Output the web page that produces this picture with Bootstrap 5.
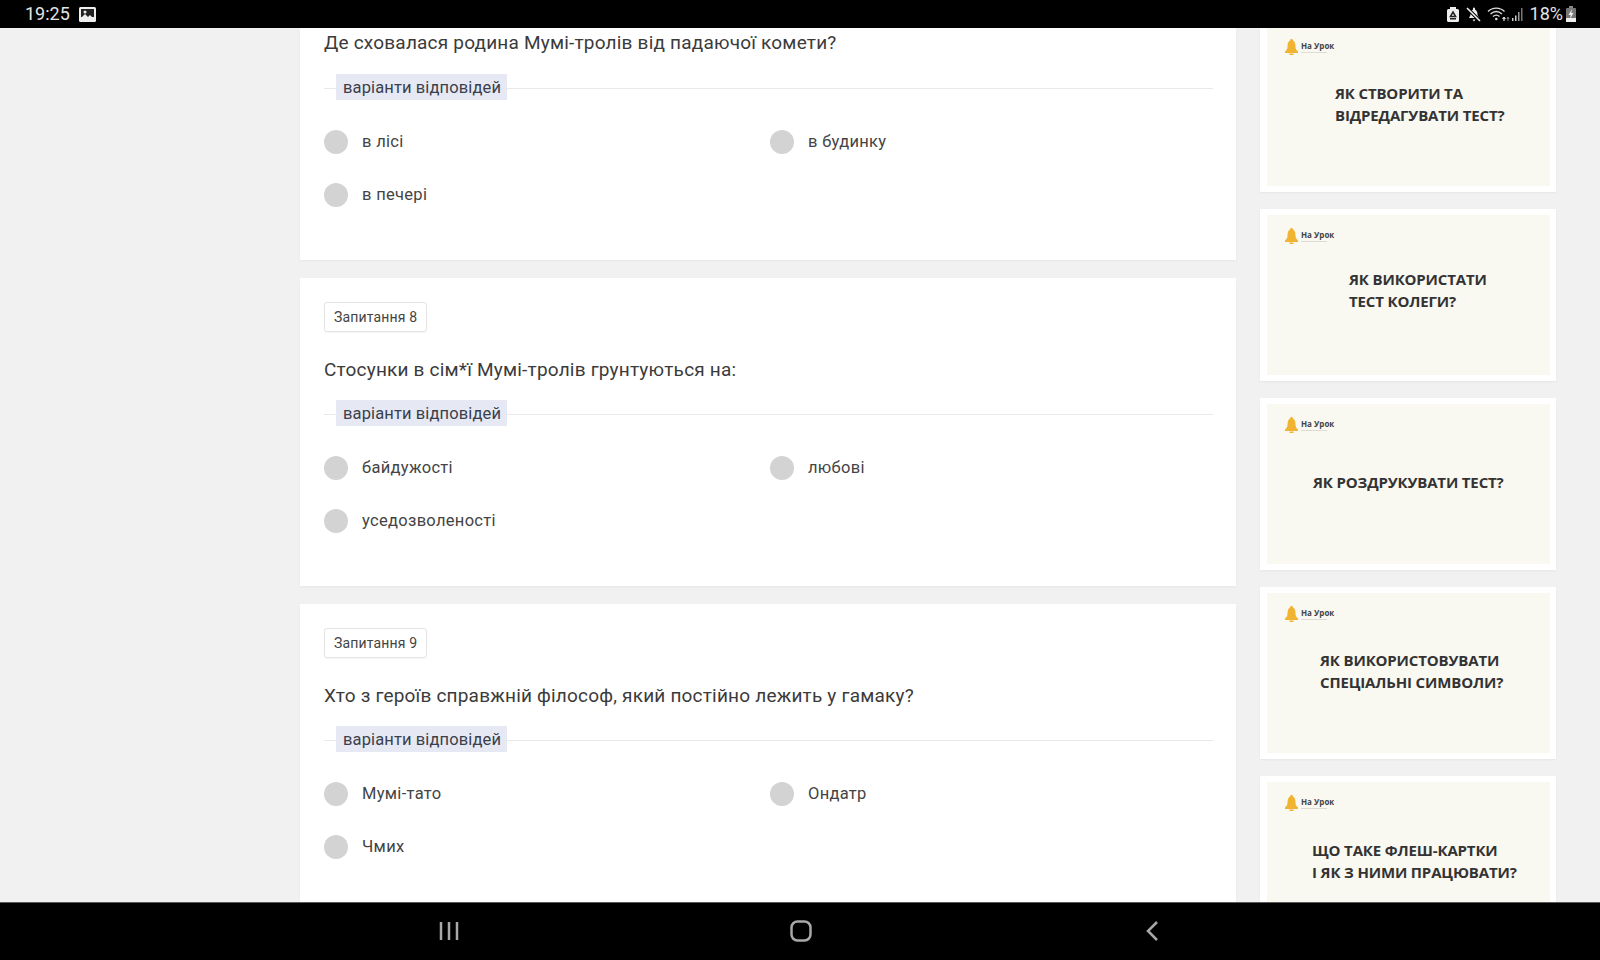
<!DOCTYPE html>
<html lang="uk">
<head>
    <meta charset="UTF-8">
    <meta name="viewport" content="width=device-width, initial-scale=1.0">
    <title>Тест - На Урок</title>
    <link href="https://cdn.jsdelivr.net/npm/bootstrap@5.3.0/dist/css/bootstrap.min.css" rel="stylesheet">
    <style>
        html, body { height: 960px; overflow: hidden; }
        body { background: #f1f1f1; font-family: Roboto, "Liberation Sans", sans-serif; color: #3a3a3a; }
        .status-bar { height: 28px; background: #000; color: #e4e4e4; font-size: 18px; line-height: 30px; padding: 0 25px; }
        .status-bar svg { display: block; }
        .status-pct { margin-left: 6px; margin-right: 3px; }
        .bottom-bar { height: 58px; background: #000; border-top: 1px solid #5a5a5a; }
        .bottom-bar svg { position: absolute; top: 18px; }
        .bottom-bar .home-icon { top: 17px; }
        .page-area { height: 874px; overflow: hidden; }
        .quiz-col { width: 936px; margin-left: 300px; }
        .side-col { width: 296px; margin-left: 24px; margin-top: -8px; }
        .quiz-card { height: 308px; margin-bottom: 18px; padding: 24px; background: #fff; border: 0; border-radius: 0; box-shadow: 0 1px 2px rgba(0,0,0,.05); }
        .quiz-card-cut { height: 232px; padding-top: 2px; }
        .quiz-card-cut .q-text { margin-top: 0; }
        .q-num { width: fit-content; height: 30px; padding: 0 9px; font-size: 14px; line-height: 28px; color: #444; border: 1px solid #e4e4e4; border-radius: 3px; box-shadow: 0 1px 1px rgba(0,0,0,.04); letter-spacing: .17px; }
        .q-text { margin: 25px 0 0; font-size: 19px; line-height: 26px; color: #3b3b3b; letter-spacing: .2px; }
        .answers-rule { height: 26px; margin: 17px -1px 0 0; padding-left: 12px; background: linear-gradient(#e9e9e9, #e9e9e9) 0 14px / 100% 1px no-repeat; }
        .quiz-card-cut .answers-rule { margin-top: 18px; }
        .answers-tag { height: 26px; padding: 0 6px 0 7px; font-size: 16.5px; line-height: 27px; color: #3a3f4b; background: #e6e9f4; letter-spacing: .12px; }
        .answers { margin-top: 15px; --bs-gutter-x: 0; --bs-gutter-y: 0; width: 892px; }
        .answer { height: 53px; }
        .answer .form-check-input { width: 24px; height: 24px; margin: 0 14px 0 0; background: #d3d3d3; border: 0; flex: none; }
        .answer label { padding-top: 1px; font-size: 16.5px; color: #444; letter-spacing: .3px; }
        .thumb-card { height: 172px; margin-bottom: 17px; padding: 6px 6px 6px 7px; background: #fff; border: 0; border-radius: 0; box-shadow: 0 1px 2px rgba(0,0,0,.05); }
        .thumb { height: 160px; display: grid; background: #f9f8f1; font-family: "Open Sans", "Liberation Sans", sans-serif; }
        .thumb > * { grid-area: 1 / 1; }
        .thumb-logo { align-self: start; margin: 13px 0 0 18px; gap: 3px; }
        .thumb-brand { font-size: 8px; line-height: 9px; font-weight: 700; color: #444; }
        .thumb-sub { width: 26px; height: 1px; margin-top: 2px; background: #dddcd4; }
        .thumb-title { align-self: center; font-size: 15px; line-height: 22.5px; font-weight: 700; color: #333; margin-top: -4px; letter-spacing: -.15px; }
        .t-1 { margin-left: 68px; }
        .t-2 { margin-left: 82px; margin-top: -10px; }
        .t-3 { margin-left: 46px; }
        .t-4 { margin-left: 53px; }
        .t-5 { margin-left: 45px; margin-top: -2px; }
    </style>
</head>
<body>
    <div class="status-bar d-flex align-items-center">
        <span>19:25</span>
        <svg style="margin-left:9px" width="17" height="15" viewBox="0 0 17 15"><rect width="17" height="15" rx="1.5" fill="#eee"/><rect x="2" y="2" width="13" height="8" fill="#222"/><path d="M2 11l4-4 3 3 2-2 4 4v1H2z" fill="#eee"/><circle cx="6" cy="5" r="1.5" fill="#eee"/></svg>
        <div class="ms-auto d-flex align-items-center">
            <svg style="margin-right:1px" width="12" height="15" viewBox="0 0 12 15"><path d="M3 0h6v2h1.500A1.500 1.500 0 0 1 12 3.500V13.500A1.500 1.500 0 0 1 10.500 15H1.500A1.500 1.500 0 0 1 0 13.500V3.500A1.500 1.500 0 0 1 1.500 2H3z" fill="#eee"/><path d="M6 5l2.600 4.500H3.400z" fill="none" stroke="#222" stroke-width="1.500"/><rect x="3" y="11" width="6" height="1.500" fill="#222"/></svg>
            <svg style="margin:0 2px 0 6px" width="15" height="15" viewBox="0 0 15 15"><path d="M7 1.500a1 1 0 0 1 2 0V2.500C11 3.500 11.500 5.500 11.500 8L13 11H3L4.500 8C4.500 5.500 5 3.500 7 2.500z" fill="#eee"/><path d="M6.500 12.500h3L8 14.500z" fill="#eee"/><path d="M1 1l13 13" stroke="#000" stroke-width="3.500"/><path d="M1 1l13 13" stroke="#eee" stroke-width="1.600"/></svg>
            <svg class="ms-1" width="24" height="16" viewBox="0 0 24 16"><g fill="none" stroke="#ddd" stroke-width="1.300"><path d="M1 5.500C5.500 1 13 1 17.500 5.500"/><path d="M3.500 8c3.500-3 8-3 11.500 0"/><path d="M6 10.500c2-1.700 4.500-1.700 6.500 0"/></g><circle cx="9.300" cy="13" r="1.300" fill="#ddd"/><path d="M17 15v-4l-1.500 1.500h3L17 11z" fill="#ddd" stroke="#ddd" stroke-width=".8"/><path d="M21 11l-1 1.500h2zM21 15v-3" stroke="#777" fill="#777"/></svg>
            <svg width="13" height="15" viewBox="0 0 13 15"><rect x="1" y="11" width="1.500" height="3" fill="#ccc"/><rect x="4" y="8.500" width="1.500" height="5.500" fill="#ccc"/><rect x="7" y="5" width="1.500" height="9" fill="#999"/><rect x="10" y="1" width="1.500" height="13" fill="#777"/></svg>
            <span class="status-pct">18%</span>
            <svg style="margin-right:-1px" width="10" height="16" viewBox="0 0 10 16"><rect x="3" y="0" width="4" height="2" fill="#888"/><rect x="0" y="2" width="10" height="14" rx="1" fill="#777"/><rect x="0" y="12" width="10" height="4" fill="#eee"/><path d="M6 3L2.500 9h2.200L4 13l3.500-6H5.300z" fill="#eee"/></svg>
        </div>
    </div>

    <div class="page-area d-flex align-items-start">
        <div class="quiz-col flex-shrink-0">
            <div class="card quiz-card quiz-card-cut">
                <p class="q-text">Де сховалася родина Мумі-тролів від падаючої комети?</p>
                <div class="answers-rule"><span class="answers-tag d-inline-block">варіанти відповідей</span></div>
                <div class="row answers">
                    <div class="col-6 answer d-flex align-items-center"><input class="form-check-input" type="radio" name="q7" id="q7a"><label for="q7a">в лісі</label></div>
                    <div class="col-6 answer d-flex align-items-center"><input class="form-check-input" type="radio" name="q7" id="q7b"><label for="q7b">в будинку</label></div>
                    <div class="col-6 answer d-flex align-items-center"><input class="form-check-input" type="radio" name="q7" id="q7c"><label for="q7c">в печері</label></div>
                </div>
            </div>
            <div class="card quiz-card">
                <div class="q-num">Запитання 8</div>
                <p class="q-text">Стосунки в сім*ї Мумі-тролів грунтуються на:</p>
                <div class="answers-rule"><span class="answers-tag d-inline-block">варіанти відповідей</span></div>
                <div class="row answers">
                    <div class="col-6 answer d-flex align-items-center"><input class="form-check-input" type="radio" name="q8" id="q8a"><label for="q8a">байдужості</label></div>
                    <div class="col-6 answer d-flex align-items-center"><input class="form-check-input" type="radio" name="q8" id="q8b"><label for="q8b">любові</label></div>
                    <div class="col-6 answer d-flex align-items-center"><input class="form-check-input" type="radio" name="q8" id="q8c"><label for="q8c">уседозволеності</label></div>
                </div>
            </div>
            <div class="card quiz-card">
                <div class="q-num">Запитання 9</div>
                <p class="q-text">Хто з героїв справжній філософ, який постійно лежить у гамаку?</p>
                <div class="answers-rule"><span class="answers-tag d-inline-block">варіанти відповідей</span></div>
                <div class="row answers">
                    <div class="col-6 answer d-flex align-items-center"><input class="form-check-input" type="radio" name="q9" id="q9a"><label for="q9a">Мумі-тато</label></div>
                    <div class="col-6 answer d-flex align-items-center"><input class="form-check-input" type="radio" name="q9" id="q9b"><label for="q9b">Ондатр</label></div>
                    <div class="col-6 answer d-flex align-items-center"><input class="form-check-input" type="radio" name="q9" id="q9c"><label for="q9c">Чмих</label></div>
                </div>
            </div>
        </div>

        <div class="side-col flex-shrink-0">
            <div class="card thumb-card"><div class="thumb">
                <div class="thumb-logo d-flex align-items-center"><svg width="13" height="16" viewBox="0 0 13 16"><path d="M6.500 0c1 0 1.500.7 1.500 1.500C10 2.500 10.500 5 10.500 8c0 2 1 3 2.500 4.500V14H0v-1.500C1.500 11 2.500 10 2.500 8c0-3 .5-5.500 2.500-6.500C5 .7 5.500 0 6.500 0z" fill="#f0b432"/><rect x="4.500" y="14.500" width="4" height="1.500" fill="#f0b432"/></svg><div><div class="thumb-brand">На Урок</div><div class="thumb-sub"></div></div></div>
                <div class="thumb-title t-1">ЯК СТВОРИТИ ТА<br>ВІДРЕДАГУВАТИ ТЕСТ?</div>
            </div></div>
            <div class="card thumb-card"><div class="thumb">
                <div class="thumb-logo d-flex align-items-center"><svg width="13" height="16" viewBox="0 0 13 16"><path d="M6.500 0c1 0 1.500.7 1.500 1.500C10 2.500 10.500 5 10.500 8c0 2 1 3 2.500 4.500V14H0v-1.500C1.500 11 2.500 10 2.500 8c0-3 .5-5.500 2.500-6.500C5 .7 5.500 0 6.500 0z" fill="#f0b432"/><rect x="4.500" y="14.500" width="4" height="1.500" fill="#f0b432"/></svg><div><div class="thumb-brand">На Урок</div><div class="thumb-sub"></div></div></div>
                <div class="thumb-title t-2">ЯК ВИКОРИСТАТИ<br>ТЕСТ КОЛЕГИ?</div>
            </div></div>
            <div class="card thumb-card"><div class="thumb">
                <div class="thumb-logo d-flex align-items-center"><svg width="13" height="16" viewBox="0 0 13 16"><path d="M6.500 0c1 0 1.500.7 1.500 1.500C10 2.500 10.500 5 10.500 8c0 2 1 3 2.500 4.500V14H0v-1.500C1.500 11 2.500 10 2.500 8c0-3 .5-5.500 2.500-6.500C5 .7 5.500 0 6.500 0z" fill="#f0b432"/><rect x="4.500" y="14.500" width="4" height="1.500" fill="#f0b432"/></svg><div><div class="thumb-brand">На Урок</div><div class="thumb-sub"></div></div></div>
                <div class="thumb-title t-3">ЯК РОЗДРУКУВАТИ ТЕСТ?</div>
            </div></div>
            <div class="card thumb-card"><div class="thumb">
                <div class="thumb-logo d-flex align-items-center"><svg width="13" height="16" viewBox="0 0 13 16"><path d="M6.500 0c1 0 1.500.7 1.500 1.500C10 2.500 10.500 5 10.500 8c0 2 1 3 2.500 4.500V14H0v-1.500C1.500 11 2.500 10 2.500 8c0-3 .5-5.500 2.500-6.500C5 .7 5.500 0 6.500 0z" fill="#f0b432"/><rect x="4.500" y="14.500" width="4" height="1.500" fill="#f0b432"/></svg><div><div class="thumb-brand">На Урок</div><div class="thumb-sub"></div></div></div>
                <div class="thumb-title t-4">ЯК ВИКОРИСТОВУВАТИ<br>СПЕЦІАЛЬНІ СИМВОЛИ?</div>
            </div></div>
            <div class="card thumb-card"><div class="thumb">
                <div class="thumb-logo d-flex align-items-center"><svg width="13" height="16" viewBox="0 0 13 16"><path d="M6.500 0c1 0 1.500.7 1.500 1.500C10 2.500 10.500 5 10.500 8c0 2 1 3 2.500 4.500V14H0v-1.500C1.500 11 2.500 10 2.500 8c0-3 .5-5.500 2.500-6.500C5 .7 5.500 0 6.500 0z" fill="#f0b432"/><rect x="4.500" y="14.500" width="4" height="1.500" fill="#f0b432"/></svg><div><div class="thumb-brand">На Урок</div><div class="thumb-sub"></div></div></div>
                <div class="thumb-title t-5">ЩО ТАКЕ ФЛЕШ-КАРТКИ<br>І ЯК З НИМИ ПРАЦЮВАТИ?</div>
            </div></div>
        </div>
    </div>

    <div class="bottom-bar position-relative">
        <svg style="left:438px" width="22" height="20" viewBox="0 0 22 20"><path d="M3 1v18M11 1v18M19 1v18" stroke="#a8a8a8" stroke-width="2.500" fill="none"/></svg>
        <svg class="home-icon" style="left:790px" width="22" height="22" viewBox="0 0 22 22"><rect x="1.500" y="1.500" width="19" height="19" rx="6" stroke="#a8a8a8" stroke-width="2.500" fill="none"/></svg>
        <svg style="left:1145px" width="14" height="20" viewBox="0 0 14 20"><path d="M12 1L3 10l9 9" stroke="#a8a8a8" stroke-width="2.500" fill="none"/></svg>
    </div>

    <script src="https://cdn.jsdelivr.net/npm/bootstrap@5.3.0/dist/js/bootstrap.bundle.min.js"></script>
</body>
</html>
